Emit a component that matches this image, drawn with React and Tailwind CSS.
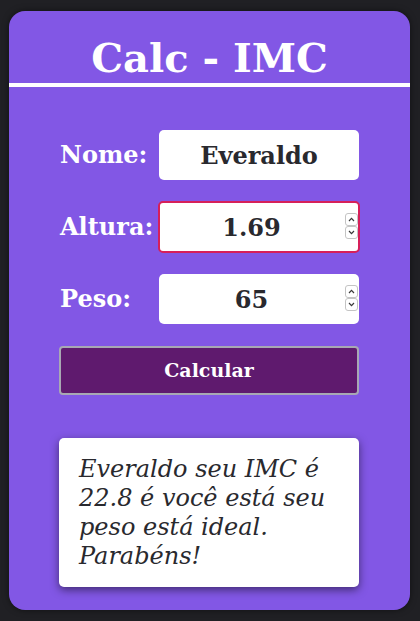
import { useState } from "react";

const numberInput =
  "[appearance:textfield] [&::-webkit-inner-spin-button]:appearance-none [&::-webkit-outer-spin-button]:appearance-none";

export default function App() {
  const [nome, setNome] = useState("Everaldo");
  const [altura, setAltura] = useState("1.69");
  const [peso, setPeso] = useState("65");

  const imc = (Number(peso) / (Number(altura) * Number(altura))).toFixed(1);

  return (
    <div className="min-h-[621px] bg-[#202024] pt-[11px] pl-[9px] font-['DejaVu_Serif',serif]">
      <div className="w-[401px] h-[599px] rounded-[16px] bg-[#8257e5] shadow-[0_0_6px_rgba(0,0,0,0.5)] overflow-hidden">
        {/* Header */}
        <h1 className="pt-[27px] h-[72px] text-center text-[40px] leading-[40px] font-bold text-white">
          Calc - IMC
        </h1>
        <div className="h-[4px] bg-white" />

        {/* Form */}
        <div className="w-[300px] ml-[50px] mt-[43px] flex flex-col gap-[22px]">
          <Row label="Nome:">
            <input
              type="text"
              value={nome}
              onChange={(e) => setNome(e.target.value)}
              className="w-[200px] h-[50px] rounded-[5px] bg-white text-center text-[24px] font-bold text-[#29292e] outline-none"
            />
          </Row>
          <Row label="Altura:">
            <div className="relative w-[200px] h-[50px]">
              <input
                type="number"
                step="0.01"
                value={altura}
                onChange={(e) => setAltura(e.target.value)}
                className={`w-[202px] h-[52px] -m-px rounded-[5px] bg-white border-2 border-[#d61f5a] pr-[15px] text-center text-[24px] font-bold text-[#29292e] outline-none ${numberInput}`}
              />
              <Spinner />
            </div>
          </Row>
          <Row label="Peso:">
            <div className="relative w-[200px] h-[50px]">
              <input
                type="number"
                value={peso}
                onChange={(e) => setPeso(e.target.value)}
                className={`w-[200px] h-[50px] rounded-[5px] bg-white pr-[15px] text-center text-[24px] font-bold text-[#29292e] outline-none ${numberInput}`}
              />
              <Spinner />
            </div>
          </Row>

          <button className="w-[300px] h-[49px] rounded-[4px] border-2 border-[#a8a8b3] bg-[#5f1a6e] text-white text-[19px] font-bold">
            Calcular
          </button>
        </div>

        {/* Resultado */}
        <div className="w-[300px] h-[149px] ml-[50px] mt-[43px] rounded-[5px] bg-white shadow-[0_3px_8px_rgba(0,0,0,0.5)] pl-[20px] pr-[14px] pt-[17px]">
          <p className="text-[24px] leading-[29px] italic text-[#29292e]">
            {nome} seu IMC é {imc} é você está seu peso está ideal. Parabéns!
          </p>
        </div>
      </div>
    </div>
  );
}

function Row({ label, children }) {
  return (
    <div className="flex items-center h-[50px]">
      <label className="w-[100px] pl-[1px] text-[24px] font-bold text-white">{label}</label>
      {children}
    </div>
  );
}

function Spinner() {
  return (
    <div className="absolute right-[1px] top-[11px] flex flex-col pointer-events-none">
      <div className="w-[13px] h-[13px] rounded-[3px] border border-[#c4c4c4] bg-white flex items-center justify-center">
        <svg width="7" height="5" viewBox="0 0 7 5" fill="none">
          <path d="M1 4 L3.5 1.3 L6 4" stroke="#3a3a3a" strokeWidth="1.2" />
        </svg>
      </div>
      <div className="w-[13px] h-[13px] rounded-[3px] border border-[#c4c4c4] bg-white flex items-center justify-center">
        <svg width="7" height="5" viewBox="0 0 7 5" fill="none">
          <path d="M1 1 L3.5 3.7 L6 1" stroke="#3a3a3a" strokeWidth="1.2" />
        </svg>
      </div>
    </div>
  );
}
